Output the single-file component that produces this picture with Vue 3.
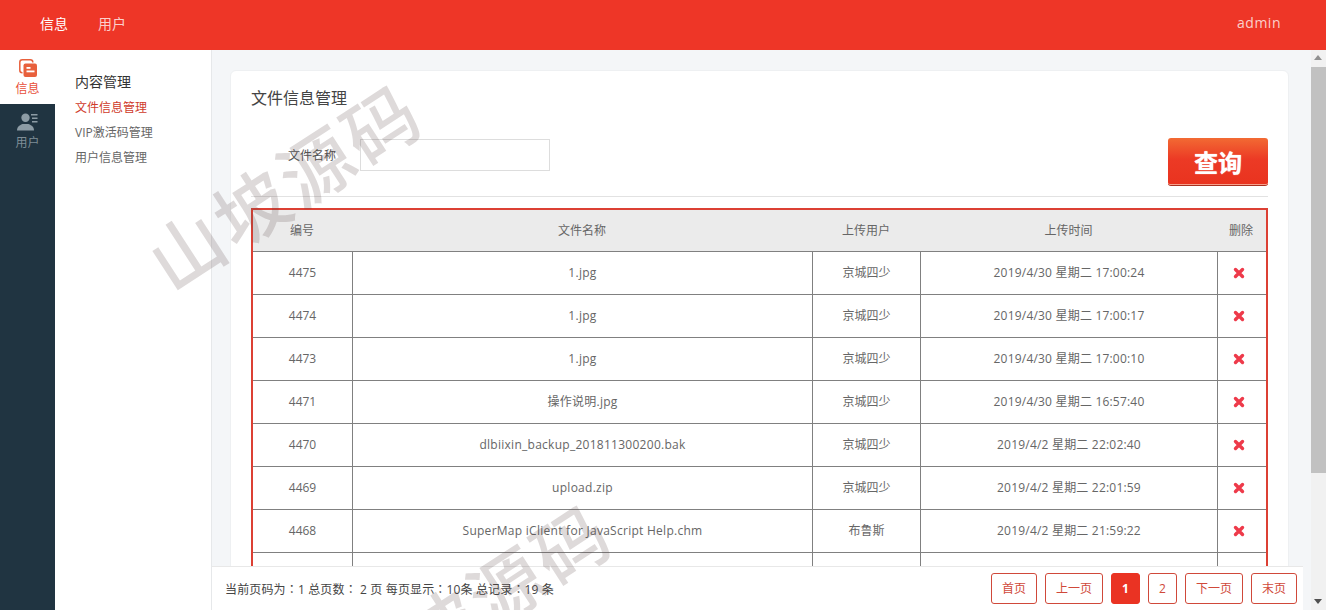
<script setup>
const rows = [
  { id: 4475, name: '1.jpg', user: '京城四少', time: '2019/4/30 星期二 17:00:24' },
  { id: 4474, name: '1.jpg', user: '京城四少', time: '2019/4/30 星期二 17:00:17' },
  { id: 4473, name: '1.jpg', user: '京城四少', time: '2019/4/30 星期二 17:00:10' },
  { id: 4471, name: '操作说明.jpg', user: '京城四少', time: '2019/4/30 星期二 16:57:40' },
  { id: 4470, name: 'dlbiixin_backup_201811300200.bak', user: '京城四少', time: '2019/4/2 星期二 22:02:40' },
  { id: 4469, name: 'upload.zip', user: '京城四少', time: '2019/4/2 星期二 22:01:59' },
  { id: 4468, name: 'SuperMap iClient for JavaScript Help.chm', user: '布鲁斯', time: '2019/4/2 星期二 21:59:22' },
  { id: '', name: '', user: '', time: '' },
]

const sideLinks = ['文件信息管理', 'VIP激活码管理', '用户信息管理']
</script>

<template>
  <div class="page">
    <header class="topbar">
      <nav class="topnav">
        <a class="active">信息</a>
        <a>用户</a>
      </nav>
      <span class="admin">admin</span>
    </header>

    <div class="body">
      <aside class="rail">
        <div class="rail-item active">
          <svg width="18" height="18" viewBox="0 0 18 18">
            <rect x="0.8" y="0.8" width="13" height="13" rx="2.5" fill="none" stroke="#e8603c" stroke-width="1.5" />
            <rect x="3.500" y="3.500" width="14.500" height="14.500" rx="2" fill="#fff" />
            <rect x="4.500" y="4.500" width="13.500" height="13.500" rx="2" fill="#e8603c" />
            <rect x="7.500" y="8" width="4" height="1.800" fill="#fff" />
            <rect x="7.500" y="11.500" width="8" height="1.800" fill="#fff" />
          </svg>
          <span>信息</span>
        </div>
        <div class="rail-item">
          <svg width="21" height="18" viewBox="0 0 21 18">
            <circle cx="8.500" cy="4.800" r="4.200" fill="#8d9ca5" />
            <path d="M0 17.500c0-3.500 2-5 5.500-6.500h6c3.500 1.500 5.500 3 5.500 6.500z" fill="#8d9ca5" />
            <rect x="14" y="1" width="6.500" height="1.500" fill="#8d9ca5" />
            <rect x="15" y="4.500" width="5.500" height="1.500" fill="#8d9ca5" />
            <rect x="15" y="8" width="5.500" height="1.500" fill="#8d9ca5" />
          </svg>
          <span>用户</span>
        </div>
      </aside>

      <aside class="side">
        <h4>内容管理</h4>
        <a
          v-for="(link, i) in sideLinks"
          :key="link"
          :class="{ current: i === 0 }"
        >{{ link }}</a>
      </aside>

      <div class="main">
        <div class="content">
          <section class="card">
            <h3>文件信息管理</h3>
            <div class="search">
              <label>文件名称</label>
              <input type="text" />
              <button type="button">查询</button>
            </div>
            <table class="grid">
              <colgroup>
                <col class="c1" />
                <col class="c2" />
                <col class="c3" />
                <col class="c4" />
                <col class="c5" />
              </colgroup>
              <thead>
                <tr>
                  <th>编号</th>
                  <th>文件名称</th>
                  <th>上传用户</th>
                  <th>上传时间</th>
                  <th>删除</th>
                </tr>
              </thead>
              <tbody>
                <tr v-for="(row, i) in rows" :key="i">
                  <td>{{ row.id }}</td>
                  <td class="spaced">{{ row.name }}</td>
                  <td>{{ row.user }}</td>
                  <td class="dated">{{ row.time }}</td>
                  <td>
                    <svg v-if="row.id" class="del" width="12" height="12" viewBox="0 0 12 12">
                      <path d="M2.500 2.500l7 7M9.500 2.500l-7 7" stroke="#ee3a4a" stroke-width="3.400" stroke-linecap="round" />
                    </svg>
                  </td>
                </tr>
              </tbody>
            </table>
          </section>
        </div>
        <footer class="footer">
          <span class="summary">当前页码为：1 总页数：  2 页 每页显示：10条 总记录：19 条</span>
          <div class="pager">
            <a class="wide">首页</a>
            <a class="wider">上一页</a>
            <a class="num on">1</a>
            <a class="num">2</a>
            <a class="wider">下一页</a>
            <a class="wide">末页</a>
          </div>
        </footer>
      </div>

      <div class="scrollbar">
        <i class="arrow up"></i>
        <div class="track"><div class="thumb"></div></div>
        <i class="arrow down"></i>
      </div>
    </div>

    <span class="mark one">山坡源码</span>
    <span class="mark two">山坡源码</span>
  </div>
</template>

<style>
html,
body {
  margin: 0;
  overflow: hidden;
}
</style>

<style scoped>
.page {
  position: relative;
  display: flex;
  flex-direction: column;
  height: 610px;
  overflow: hidden;
  font-family: "Open Sans", "Noto Sans CJK SC", sans-serif;
  font-size: 12px;
  color: #666;
}

.topbar {
  flex: none;
  display: flex;
  align-items: center;
  justify-content: space-between;
  height: 45px;
  padding: 0 45px 5px 40px;
  background: #ee3627;
  color: #fbd0cb;
  font-size: 14px;
}

.topnav {
  display: flex;
  gap: 30px;
}

.topnav .active {
  color: #fff;
}

.admin {
  letter-spacing: 0.5px;
}

.body {
  flex: 1;
  display: flex;
  min-height: 0;
}

.rail {
  flex: none;
  width: 55px;
  background: #203441;
}

.rail-item {
  display: flex;
  flex-direction: column;
  align-items: center;
  height: 54px;
  padding-top: 9px;
  box-sizing: border-box;
  color: #7f8e97;
}

.rail-item.active {
  background: #fff;
  color: #e8503a;
}

.rail-item span {
  line-height: 18px;
  margin-top: 3px;
}

.side {
  flex: none;
  display: flex;
  flex-direction: column;
  width: 157px;
  padding: 22px 0 0 20px;
  box-sizing: border-box;
  background: #fff;
  border-right: 1px solid #e6e8ea;
}

.side h4 {
  margin: 0 0 3px;
  font-size: 14px;
  font-weight: 400;
  line-height: 20px;
  color: #333;
}

.side a {
  line-height: 25px;
  color: #666;
}

.side a.current {
  color: #cf3b2b;
}

.main {
  flex: 1;
  display: flex;
  flex-direction: column;
  min-width: 0;
  background: #f4f6f8;
}

.content {
  flex: 1;
  min-height: 0;
  overflow: hidden;
  padding: 21px 23px 0 19px;
}

.card {
  padding: 0 20px;
  background: #fff;
  border: 1px solid #eef0f2;
  border-radius: 6px;
  margin: -1px;
}

.card h3 {
  margin: 0;
  padding-top: 16px;
  font-size: 16px;
  font-weight: 400;
  line-height: 22px;
  color: #444;
}

.search {
  display: flex;
  align-items: flex-start;
  margin-top: 29px;
  padding-bottom: 10px;
  border-bottom: 1px solid #e2e2e2;
}

.search label {
  width: 85px;
  margin-right: 24px;
  margin-top: 10px;
  line-height: 16px;
  text-align: right;
  color: #555;
}

.search input {
  width: 190px;
  height: 32px;
  padding: 0;
  margin-top: 1px;
  box-sizing: border-box;
  border: 1px solid #ddd;
  background: transparent;
}

.search button {
  width: 100px;
  height: 48px;
  margin-left: auto;
  padding: 0;
  border: 0;
  border-bottom: 1px solid #a8301f;
  border-radius: 3px;
  box-shadow: inset 0 -1px 0 #f7a08c;
  background: linear-gradient(#f26a33, #ec3a25 45%, #e9331f);
  color: #fff;
  font-family: inherit;
  font-size: 24px;
  font-weight: 700;
  text-shadow: 0 0 1px #fff;
  box-sizing: border-box;
}

.grid {
  width: 1017px;
  margin-top: 11px;
  table-layout: fixed;
  border-collapse: separate;
  border-spacing: 0;
  border: 2px solid #dc4034;
}

.c1 { width: 100px; }
.c2 { width: 460px; }
.c3 { width: 108px; }
.c4 { width: 297px; }
.c5 { width: 48px; }

.grid th {
  height: 39px;
  padding: 0 2px 2px 0;
  background: #ebebeb;
  font-weight: 400;
  color: #666;
  border-bottom: 1px solid #808080;
}

.grid td {
  height: 40px;
  padding: 0 0 2px;
  text-align: center;
  color: #666;
  border-bottom: 1px solid #808080;
  border-right: 1px solid #808080;
}

.grid td:last-child {
  border-right: 0;
}

.grid td.spaced {
  letter-spacing: 0.27px;
}

.grid td.dated {
  letter-spacing: 0.2px;
}

.del {
  display: inline-block;
  vertical-align: middle;
  margin-right: 7px;
}

.footer {
  flex: none;
  display: flex;
  align-items: center;
  justify-content: space-between;
  height: 44px;
  margin-right: 8px;
  padding: 0 6px 0 13px;
  box-sizing: border-box;
  background: #fff;
  border-top: 1px solid #e8e8e8;
  color: #444;
}

.summary {
  font-family: "Open Sans", "Noto Sans CJK TC", sans-serif;
  letter-spacing: 0.15px;
  white-space: pre;
}

.pager {
  display: flex;
  gap: 8px;
}

.pager a {
  height: 31px;
  box-sizing: border-box;
  border: 1px solid #d0493a;
  border-radius: 3px;
  line-height: 29px;
  text-align: center;
  color: #d0493a;
}

.pager .wide { width: 46px; }
.pager .wider { width: 58px; }
.pager .num { width: 29px; }

.pager .on {
  background: #ea3323;
  border-color: #ea3323;
  color: #fff;
  font-weight: 700;
}

.scrollbar {
  flex: none;
  display: flex;
  flex-direction: column;
  width: 15px;
  background: #f1f1f1;
}

.track {
  flex: 1;
}

.thumb {
  height: 406px;
  background: #c1c1c1;
}

.arrow {
  flex: none;
  display: block;
  height: 17px;
  position: relative;
}

.arrow::after {
  content: "";
  position: absolute;
  left: 3px;
  border-left: 4.500px solid transparent;
  border-right: 4.500px solid transparent;
}

.arrow.up::after {
  top: 5px;
  border-bottom: 5px solid #505050;
  opacity: 0.6;
}

.arrow.down::after {
  top: 6px;
  border-top: 5px solid #505050;
}

.mark {
  position: absolute;
  transform: translate(-50%, -50%) rotate(-33deg);
  font-size: 73px;
  font-weight: 500;
  letter-spacing: 4px;
  line-height: 1;
  white-space: nowrap;
  color: rgba(90, 70, 70, 0.2);
  pointer-events: none;
}

.mark.one {
  left: 285px;
  top: 186px;
}

.mark.two {
  left: 475px;
  top: 606px;
}
</style>
